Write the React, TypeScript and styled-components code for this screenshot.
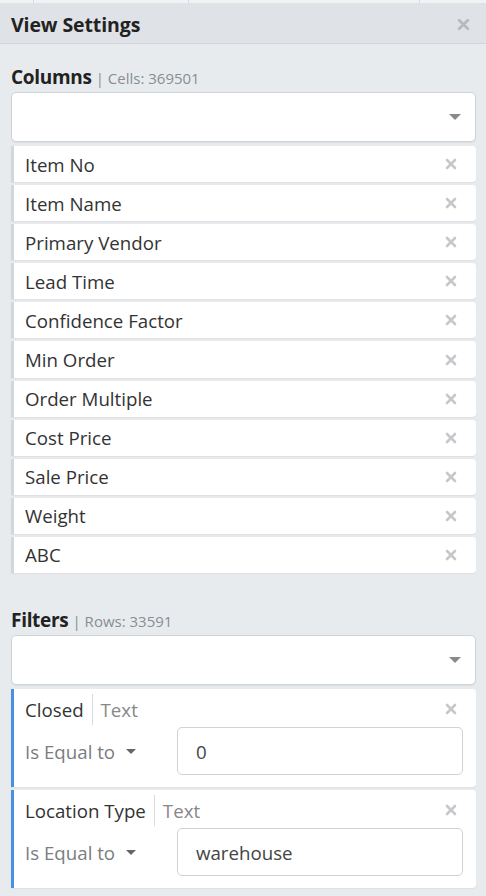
import React from "react";
import styled, { createGlobalStyle } from "styled-components";

const GlobalStyle = createGlobalStyle`
  html, body {
    margin: 0;
    padding: 0;
    background: #e8ebee;
    font-family: "Open Sans", "Noto Sans", sans-serif;
    color: #333;
  }
`;

const columns = [
  "Item No",
  "Item Name",
  "Primary Vendor",
  "Lead Time",
  "Confidence Factor",
  "Min Order",
  "Order Multiple",
  "Cost Price",
  "Sale Price",
  "Weight",
  "ABC",
];

const filters = [
  { name: "Closed", type: "Text", op: "Is Equal to", value: "0" },
  { name: "Location Type", type: "Text", op: "Is Equal to", value: "warehouse" },
];

function CloseIcon({ size = 12, color = "#c6c8cb" }: { size?: number; color?: string }) {
  return (
    <svg width={size} height={size} viewBox="0 0 12 12">
      <path d="M2 2 L10 10 M10 2 L2 10" stroke={color} strokeWidth="2.6" strokeLinecap="round" />
    </svg>
  );
}

function Caret({ w = 12, color = "#8a8a8a" }: { w?: number; color?: string }) {
  return (
    <svg width={w} height={w / 2} viewBox="0 0 12 6">
      <path d="M0 0 L12 0 L6 6 Z" fill={color} />
    </svg>
  );
}

function App() {
  return (
    <>
      <GlobalStyle />
      <Panel>
        <TopStrip>
          <StripCell $w={33} />
          <StripCell $w={155} />
          <StripCell $w={232} />
          <StripCell $w={66} />
        </TopStrip>
        <Header>
          <h2>View Settings</h2>
          <CloseIcon size={13} color="#b7babe" />
        </Header>
        <Body>
          <SectionTitle>
            <strong>Columns</strong>
            <small>| Cells: 369501</small>
          </SectionTitle>
          <Dropdown>
            <Caret />
          </Dropdown>
          <List>
            {columns.map((c) => (
              <ColumnItem key={c}>
                <span>{c}</span>
                <CloseIcon />
              </ColumnItem>
            ))}
          </List>

          <SectionTitle $spaced>
            <strong>Filters</strong>
            <small>| Rows: 33591</small>
          </SectionTitle>
          <Dropdown>
            <Caret />
          </Dropdown>
          <List>
            {filters.map((f) => (
              <FilterCard key={f.name}>
                <FilterHead>
                  <FilterName>{f.name}</FilterName>
                  <FilterType>{f.type}</FilterType>
                  <Spacer />
                  <CloseIcon />
                </FilterHead>
                <FilterRow>
                  <Operator>
                    {f.op}
                    <Caret w={10} color="#666" />
                  </Operator>
                  <ValueInput>{f.value}</ValueInput>
                </FilterRow>
              </FilterCard>
            ))}
          </List>
        </Body>
      </Panel>
    </>
  );
}

export default App;

const Panel = styled.div`
  display: flex;
  flex-direction: column;
  min-height: 896px;
`;

const TopStrip = styled.div`
  display: flex;
  height: 3px;
  background: #f1f2f4;
`;

const StripCell = styled.div<{ $w: number }>`
  width: ${(p) => p.$w}px;
  border-right: 1px solid #d6d9dd;
  &:last-child {
    border-right: none;
  }
`;

const Header = styled.div`
  display: flex;
  align-items: center;
  justify-content: space-between;
  height: 41px;
  padding: 2px 16px 0 11px;
  box-sizing: border-box;
  background: #dfe2e6;
  border-bottom: 1px solid #d2d6da;
  h2 {
    margin: 0;
    font-size: 19.5px;
    font-weight: 700;
    color: #222;
    letter-spacing: -0.1px;
  }
`;

const Body = styled.div`
  display: flex;
  flex-direction: column;
  padding: 0 10px 0 11px;
`;

const SectionTitle = styled.div<{ $spaced?: boolean }>`
  display: flex;
  align-items: baseline;
  gap: 4px;
  margin-top: ${(p) => (p.$spaced ? "34px" : "20px")};
  height: 28px;
  strong {
    font-size: 19px;
    font-weight: 700;
    color: #222;
    letter-spacing: -0.3px;
  }
  small {
    font-size: 15px;
    color: #8a8d91;
  }
`;

const Dropdown = styled.div`
  display: flex;
  align-items: center;
  justify-content: flex-end;
  height: 48px;
  padding-right: 14px;
  background: #fff;
  border: 1px solid #cfd2d6;
  border-radius: 5px;
  box-shadow: 0 1px 1px rgba(0, 0, 0, 0.06);
`;

const List = styled.div`
  display: flex;
  flex-direction: column;
  gap: 3px;
  margin-top: 4px;
`;

const ColumnItem = styled.div`
  display: flex;
  align-items: center;
  justify-content: space-between;
  height: 36.1px;
  padding: 0 19px 0 11px;
  background: #fff;
  border-left: 3px solid #d3d7dc;
  border-radius: 0 4px 4px 0;
  box-shadow: 0 1px 1px rgba(0, 0, 0, 0.05);
  font-size: 18.7px;
  color: #333;
`;

const FilterCard = styled.div`
  display: flex;
  flex-direction: column;
  padding: 2px 13px 12px 11px;
  background: #fff;
  border-left: 3px solid #4a90e2;
  border-radius: 0 4px 4px 0;
  box-shadow: 0 1px 1px rgba(0, 0, 0, 0.05);
  & > div:first-child svg {
    margin-right: 6px;
  }
`;

const FilterHead = styled.div`
  display: flex;
  align-items: center;
  height: 36px;
  font-size: 18.7px;
`;

const FilterName = styled.span`
  color: #333;
  padding-right: 8px;
  border-right: 1px solid #d8dadd;
  line-height: 31px;
`;

const FilterType = styled.span`
  color: #888;
  padding-left: 8px;
`;

const Spacer = styled.div`
  flex: 1;
`;

const FilterRow = styled.div`
  display: flex;
  align-items: center;
`;

const Operator = styled.div`
  display: flex;
  align-items: center;
  gap: 11px;
  width: 152px;
  font-size: 18.7px;
  color: #7a7d81;
`;

const ValueInput = styled.div`
  flex: 1;
  display: flex;
  align-items: center;
  height: 46px;
  padding: 0 18px;
  background: #fff;
  border: 1px solid #cfd2d6;
  border-radius: 5px;
  font-size: 18.7px;
  color: #444;
`;
